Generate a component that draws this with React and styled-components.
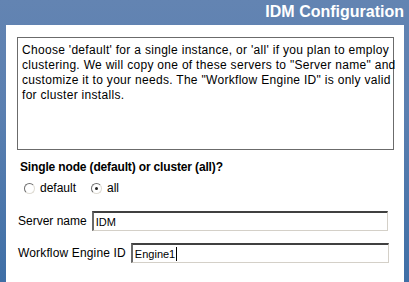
import React from "react";
import styled, { createGlobalStyle } from "styled-components";

const GlobalStyle = createGlobalStyle`
  html, body {
    margin: 0;
    padding: 0;
    width: 409px;
    height: 282px;
    overflow: hidden;
  }
  body {
    font-family: "Liberation Sans", Arial, sans-serif;
  }
`;

const Frame = styled.div`
  width: 409px;
  height: 282px;
  display: flex;
  flex-direction: column;
  background: linear-gradient(180deg, #6384b2 0%, #5a7fb0 40%, #3f6fa6 100%);
`;

const Header = styled.div`
  height: 25px;
  display: flex;
  align-items: flex-start;
  justify-content: flex-end;
  padding-right: 5px;
  box-sizing: border-box;
`;

const Title = styled.h1`
  margin: 2px 0 0;
  font-size: 16px;
  line-height: 19px;
  font-weight: bold;
  color: #ffffff;
`;

const Panel = styled.div`
  flex: 1;
  margin: 0 5px 0 6px;
  background: #ffffff;
  padding: 12px 10px 0 11px;
  display: flex;
  flex-direction: column;
  color: #000;
  font-size: 12px;
`;

const Info = styled.div`
  width: 377px;
  height: 113px;
  box-sizing: border-box;
  border: 1px solid #6b6b6b;
  padding: 5px 4px 0 4px;
  line-height: 15px;
  letter-spacing: 0.3px;
  white-space: nowrap;
`;

const Question = styled.div`
  margin: 10px 0 0 3px;
  font-weight: bold;
  line-height: 15px;
  letter-spacing: -0.15px;
`;

const RadioRow = styled.div`
  display: flex;
  align-items: center;
  gap: 15px;
  margin: 5px 0 0 7px;
  height: 16px;
`;

const RadioOption = styled.label`
  display: flex;
  align-items: center;
  gap: 5px;
`;

const RadioDot = styled.span`
  width: 11px;
  height: 11px;
  border-radius: 50%;
  box-sizing: border-box;
  border: 1px solid #8f8f8f;
  border-top-color: #6e6e6e;
  border-left-color: #6e6e6e;
  border-bottom-color: #dedbd3;
  border-right-color: #dedbd3;
  background: #fff;
  display: flex;
  align-items: center;
  justify-content: center;
  &::after {
    content: "";
    width: 3px;
    height: 3px;
    border-radius: 50%;
    background: ${(p) => (p.$checked ? "#222" : "transparent")};
  }
`;

const FieldRow = styled.div`
  display: flex;
  align-items: center;
  gap: 5px;
  margin: ${(p) => p.$top}px 0 0 1px;
  height: 20px;
`;

const Label = styled.span`
  white-space: nowrap;
  letter-spacing: ${(p) => p.$spacing || 0}px;
`;

const Field = styled.div`
  flex: 1;
  max-width: ${(p) => p.$width}px;
  height: 20px;
  box-sizing: border-box;
  border-style: solid;
  border-width: 2px 1px 1px 2px;
  border-top-color: #404040;
  border-left-color: #6a6a6a;
  border-right-color: #d4d0c8;
  border-bottom-color: #d4d0c8;
  display: flex;
  align-items: center;
  padding-left: 2px;
  font-size: 11px;
`;

const Caret = styled.span`
  display: inline-block;
  width: 1px;
  height: 14px;
  background: #000;
  margin-left: 1px;
`;

export default function App() {
  return (
    <>
      <GlobalStyle />
      <Frame>
        <Header>
          <Title>IDM Configuration</Title>
        </Header>
        <Panel>
          <Info>
            Choose 'default' for a single instance, or 'all' if you plan to employ
            <br />
            clustering. We will copy one of these servers to "Server name" and
            <br />
            customize it to your needs. The "Workflow Engine ID" is only valid
            <br />
            for cluster installs.
          </Info>
          <Question>Single node (default) or cluster (all)?</Question>
          <RadioRow>
            <RadioOption>
              <RadioDot />
              default
            </RadioOption>
            <RadioOption>
              <RadioDot $checked />
              all
            </RadioOption>
          </RadioRow>
          <FieldRow $top={15}>
            <Label>Server name</Label>
            <Field $width={296}>IDM</Field>
          </FieldRow>
          <FieldRow $top={12}>
            <Label $spacing={0.15}>Workflow Engine ID</Label>
            <Field $width={258}>
              Engine1
              <Caret />
            </Field>
          </FieldRow>
        </Panel>
      </Frame>
    </>
  );
}
